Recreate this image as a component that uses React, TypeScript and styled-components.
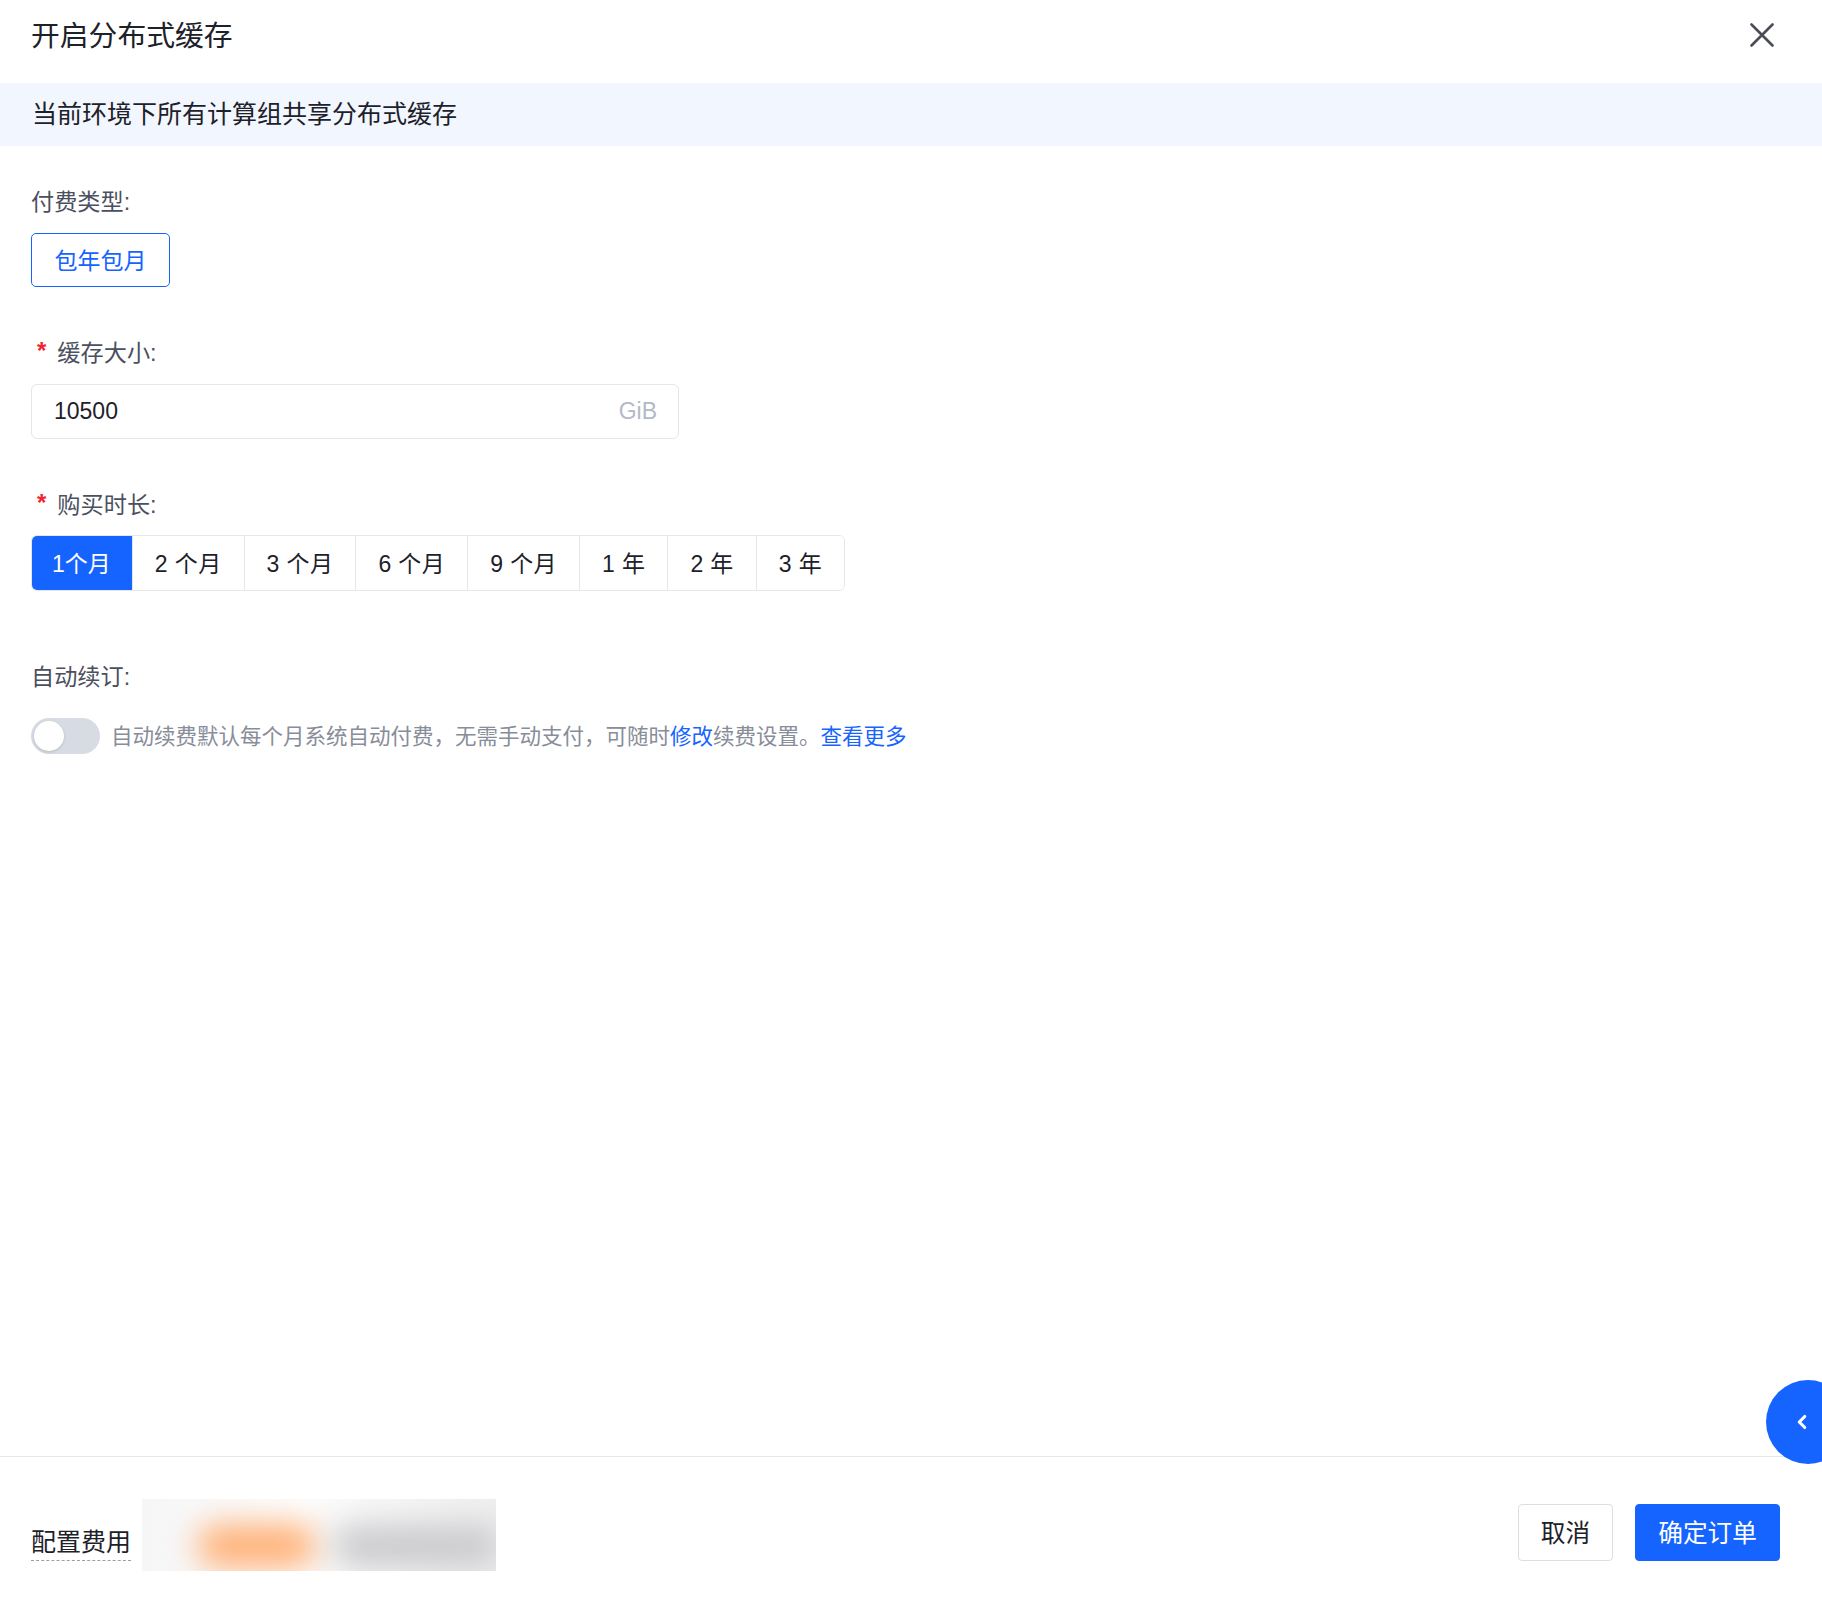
import React from "react";
import styled, { createGlobalStyle } from "styled-components";
import { ChevronLeft } from "lucide-react";

const GlobalStyle = createGlobalStyle`
  html, body {
    margin: 0;
    padding: 0;
    background: #fff;
  }
  body {
    font-family: "Liberation Sans", "Noto Sans CJK SC", sans-serif;
    color: #1d2129;
  }
  * {
    box-sizing: border-box;
  }
`;

const durations = ["1个月", "2 个月", "3 个月", "6 个月", "9 个月", "1 年", "2 年", "3 年"];

const App: React.FC = () => {
  return (
    <Dialog>
      <GlobalStyle />
      <Header>
        <Title>开启分布式缓存</Title>
        <CloseButton aria-label="关闭">
          <svg width="24" height="24" viewBox="0 0 24 24">
            <path d="M1.5 1.5 L22.5 22.5 M22.5 1.5 L1.5 22.5" stroke="#4a4d55" strokeWidth="2.6" strokeLinecap="round" />
          </svg>
        </CloseButton>
      </Header>
      <Notice>当前环境下所有计算组共享分布式缓存</Notice>

      <Body>
        <Field>
          <Label>付费类型:</Label>
          <OptionButton>包年包月</OptionButton>
        </Field>

        <Field>
          <Label>
            <Required>*</Required>缓存大小:
          </Label>
          <InputBox>
            <InputValue>10500</InputValue>
            <Unit>GiB</Unit>
          </InputBox>
        </Field>

        <Field $gap={68}>
          <Label>
            <Required>*</Required>购买时长:
          </Label>
          <Segmented>
            {durations.map((d, i) => (
              <Segment key={d} $active={i === 0}>
                {d}
              </Segment>
            ))}
          </Segmented>
        </Field>

        <Field>
          <Label>自动续订:</Label>
          <RenewRow>
            <Toggle>
              <Knob />
            </Toggle>
            <Hint>
              自动续费默认每个月系统自动付费，无需手动支付，可随时<Link>修改</Link>续费设置。<Link>查看更多</Link>
            </Hint>
          </RenewRow>
        </Field>
      </Body>

      <Footer>
        <Cost>
          <CostLabel>配置费用</CostLabel>
          <BlurredPrice>
            <Blob $color="#ffae72" $w={120} $left={55} />
            <Blob $color="#c9c9cc" $w={170} $left={190} />
          </BlurredPrice>
        </Cost>
        <Actions>
          <Button>取消</Button>
          <Button $primary>确定订单</Button>
        </Actions>
      </Footer>

      <FloatTab>
        <ChevronLeft size={22} strokeWidth={3.4} color="#fff" />
      </FloatTab>
    </Dialog>
  );
};

export default App;

const Dialog = styled.div`
  position: relative;
  overflow: hidden;
  display: flex;
  flex-direction: column;
  width: 100%;
  min-height: 1600px;
  background: #fff;
`;

const Header = styled.div`
  display: flex;
  align-items: flex-start;
  justify-content: space-between;
  height: 83px;
  padding: 16px 47px 0 31px;
`;

const Title = styled.h1`
  margin: 0;
  font-size: 28.8px;
  font-weight: 400;
  line-height: 40px;
  color: #1d2129;
`;

const CloseButton = styled.button`
  display: flex;
  align-items: center;
  justify-content: center;
  width: 26px;
  height: 38px;
  padding: 0;
  border: none;
  background: transparent;
  cursor: pointer;
`;

const Notice = styled.div`
  height: 63px;
  padding: 0 32px;
  background: #f2f6fe;
  font-size: 25px;
  line-height: 63px;
  color: #1d2129;
`;

const Body = styled.div`
  flex: 1;
  padding: 38px 31px 0;
`;

const Field = styled.div<{ $gap?: number }>`
  display: flex;
  flex-direction: column;
  align-items: flex-start;
  margin-bottom: ${(p) => p.$gap ?? 48}px;
`;

const Label = styled.div`
  display: flex;
  align-items: center;
  height: 32px;
  margin-bottom: 17px;
  font-size: 23.2px;
  color: #4b5060;
`;

const Required = styled.span`
  display: inline-block;
  margin: 0 11px 0 6px;
  color: #f0242d;
  font-size: 24px;
  font-weight: 700;
`;

const OptionButton = styled.button`
  height: 54px;
  width: 139px;
  padding: 0 0 2px;
  border: 1.5px solid #1664ff;
  border-radius: 5px;
  background: #fff;
  color: #1664ff;
  font-family: inherit;
  font-size: 23px;
  cursor: pointer;
`;

const InputBox = styled.div`
  display: flex;
  align-items: center;
  justify-content: space-between;
  width: 648px;
  height: 55px;
  padding: 0 21px 0 22px;
  border: 1px solid #e5e6eb;
  border-radius: 6px;
`;

const InputValue = styled.span`
  font-size: 23px;
  color: #1d2129;
`;

const Unit = styled.span`
  font-size: 23px;
  color: #b4b9c4;
`;

const Segmented = styled.div`
  display: flex;
  height: 56px;
  margin-top: -1px;
  border: 1px solid #e5e6eb;
  border-radius: 6px;
  overflow: hidden;
`;

const Segment = styled.div<{ $active?: boolean }>`
  display: flex;
  align-items: center;
  justify-content: center;
  padding: 0 22px 2px;
  font-size: 23px;
  letter-spacing: 0.4px;
  color: ${(p) => (p.$active ? "#fff" : "#1d2129")};
  background: ${(p) => (p.$active ? "#1664ff" : "#fff")};
  border-left: 1px solid ${(p) => (p.$active ? "#1664ff" : "#e5e6eb")};
  cursor: pointer;

  &:first-child {
    border-left: none;
    margin: -1px 0 -1px -1px;
    padding-left: 21px;
    padding-right: 21px;
    letter-spacing: 0;
  }
`;

const RenewRow = styled.div`
  display: flex;
  align-items: center;
  gap: 11px;
  margin-top: 10px;
`;

const Toggle = styled.div`
  display: flex;
  align-items: center;
  width: 69px;
  height: 36px;
  padding: 3px;
  border-radius: 18px;
  background: #d7dbe3;
`;

const Knob = styled.div`
  width: 30px;
  height: 30px;
  border-radius: 50%;
  background: #fff;
  box-shadow: 0 1px 3px rgba(0, 0, 0, 0.15);
`;

const Hint = styled.span`
  margin-top: -4px;
  font-size: 21.5px;
  color: #878d99;
`;

const Link = styled.a`
  color: #1664ff;
  cursor: pointer;
`;

const Footer = styled.div`
  display: flex;
  align-items: flex-start;
  justify-content: space-between;
  height: 144px;
  padding: 47px 42px 0 31px;
  border-top: 1px solid #e5e6eb;
`;

const Cost = styled.div`
  display: flex;
  align-items: flex-end;
  gap: 11px;
  margin-top: -5px;
`;

const CostLabel = styled.span`
  margin-bottom: 10px;
  padding-bottom: 2px;
  border-bottom: 1.5px dashed #9aa0aa;
  font-size: 25px;
  line-height: 32px;
  color: #1d2129;
`;

const BlurredPrice = styled.div`
  position: relative;
  width: 354px;
  height: 72px;
  overflow: hidden;
  background: linear-gradient(90deg, #f6f6f7 0%, #fdfdfd 45%, #efeff0 100%);
`;

const Blob = styled.span<{ $color: string; $w: number; $left: number }>`
  position: absolute;
  top: 26px;
  left: ${(p) => p.$left}px;
  width: ${(p) => p.$w}px;
  height: 42px;
  border-radius: 21px;
  background: ${(p) => p.$color};
  filter: blur(16px);
`;

const Actions = styled.div`
  display: flex;
  gap: 22px;
`;

const Button = styled.button<{ $primary?: boolean }>`
  height: 57px;
  padding: 0 22px 3px;
  border: 1px solid ${(p) => (p.$primary ? "#1664ff" : "#dcdee3")};
  border-radius: 4px;
  background: ${(p) => (p.$primary ? "#1664ff" : "#fff")};
  color: ${(p) => (p.$primary ? "#fff" : "#1d2129")};
  font-family: inherit;
  font-size: 24.7px;
  cursor: pointer;
`;

const FloatTab = styled.div`
  position: absolute;
  top: 1380px;
  right: -28px;
  display: flex;
  align-items: center;
  justify-content: center;
  width: 84px;
  height: 84px;
  padding-right: 12px;
  border-radius: 50%;
  background: #1664ff;
`;
